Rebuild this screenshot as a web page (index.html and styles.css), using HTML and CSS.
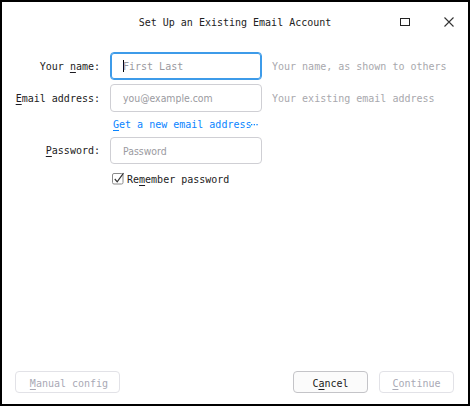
FILE: index.html
```html
<!DOCTYPE html>
<html>
<head>
<meta charset="utf-8">
<link rel="stylesheet" href="styles.css">
</head>
<body>
<div class="window">
  <div class="titlebar">
    <div class="title">Set Up an Existing Email Account</div>
    <div class="controls">
      <svg class="ctl" width="10" height="10" viewBox="0 0 10 10"><rect x="0.5" y="1.5" width="9" height="7" fill="none" stroke="#222" stroke-width="1"/></svg>
      <svg class="ctl" width="10" height="10" viewBox="0 0 10 10"><path d="M0.5 0.5 L9.5 9.5 M9.5 0.5 L0.5 9.5" stroke="#333" stroke-width="1.1"/></svg>
    </div>
  </div>
  <div class="form">
    <label class="label">Your <u>n</u>ame:</label>
    <div class="input focused"><span class="caret"></span><span class="ph mono">First Last</span></div>
    <div class="hint">Your name, as shown to others</div>

    <label class="label"><u>E</u>mail address:</label>
    <div class="input"><span class="ph prop">you@example.com</span></div>
    <div class="hint">Your existing email address</div>

    <div></div>
    <div class="link"><u>G</u>et a new email address<svg class="dots" width="7" height="2" viewBox="0 0 7 2"><rect x="0" y="0" width="1.3" height="1.3" fill="#0a84ff"/><rect x="2.7" y="0" width="1.3" height="1.3" fill="#0a84ff"/><rect x="5.4" y="0" width="1.3" height="1.3" fill="#0a84ff"/></svg></div>
    <div></div>

    <label class="label"><u>P</u>assword:</label>
    <div class="input"><span class="ph prop">Password</span></div>
    <div></div>

    <div></div>
    <div class="check">
      <svg class="box" width="13" height="13" viewBox="0 0 13 13"><rect x="0.5" y="1.5" width="10.5" height="10.5" rx="1.5" fill="#fff" stroke="#8a8a8a"/><path d="M2.8 7 L5.2 9.8 L11.5 1.2" fill="none" stroke="#333" stroke-width="1.2"/></svg>
      <span>Re<u>m</u>ember password</span>
    </div>
    <div></div>
  </div>
  <div class="spacer"></div>
  <div class="buttons">
    <button class="btn disabled wide"><u>M</u>anual config</button>
    <div class="grow"></div>
    <button class="btn">C<u>a</u>ncel</button>
    <button class="btn disabled"><u>C</u>ontinue</button>
  </div>
</div>
</body>
</html>
```
FILE: styles.css
```css
html, body {
  margin: 0;
  padding: 0;
  background: #fff;
}
body {
  font-family: "DejaVu Sans Mono", monospace;
  font-size: 10px;
  color: #1c1b22;
}
.window {
  width: 470px;
  height: 406px;
  box-sizing: border-box;
  border: 2px solid #000;
  display: flex;
  flex-direction: column;
  background: #fff;
}
.titlebar {
  height: 40px;
  display: flex;
  align-items: center;
  justify-content: center;
  position: relative;
}
.title {
  font-size: 10px;
  color: #222;
}
.controls {
  position: absolute;
  right: 14px;
  top: 15px;
  display: flex;
  gap: 34px;
}
.ctl { display: block; }
.form {
  display: grid;
  grid-template-columns: 98px 152px auto;
  grid-template-rows: 28px 28px 17px 27px 22px;
  column-gap: 10px;
  row-gap: 4px;
  margin-top: 10px;
}
.label {
  text-align: right;
  align-self: center;
  color: #1c1b22;
}
u {
  text-decoration: underline;
  text-underline-offset: 2px;
  text-decoration-thickness: 1px;
}
.input {
  box-sizing: border-box;
  border: 1px solid #cfcfd4;
  border-radius: 4px;
  display: flex;
  align-items: center;
  padding-left: 12px;
  background: #fff;
}
.input.focused {
  border: 1px solid #3d9be9;
  box-shadow: 0 0 0 1px #3d9be9 inset;
}
.caret {
  display: inline-block;
  width: 1px;
  height: 12px;
  background: #000;
  margin-right: -1px;
}
.ph { color: #9a9aa0; }
.ph.prop {
  font-family: "DejaVu Sans Condensed", "DejaVu Sans", sans-serif;
  font-size: 10.4px;
}
.hint {
  align-self: center;
  color: #a8a8ad;
  white-space: nowrap;
}
.link {
  color: #0a84ff;
  align-self: center;
  padding-left: 3px;
  white-space: nowrap;
}
.dots {
  display: inline-block;
  vertical-align: 2px;
  margin-left: 0;
}
.check {
  display: flex;
  align-items: center;
  gap: 2px;
  padding-left: 2px;
  color: #1c1b22;
}
.box { display: block; margin-top: -2px; }
.spacer { flex: 1; }
.buttons {
  display: flex;
  align-items: center;
  gap: 11px;
  padding: 0 14px 11px 13px;
}
.grow { flex: 1; }
.btn {
  font-family: "DejaVu Sans Mono", monospace;
  font-size: 10px;
  height: 22px;
  width: 75px;
  box-sizing: border-box;
  border: 1px solid #c4c4c8;
  border-radius: 4px;
  background: #fbfbfb;
  color: #1c1b22;
  padding: 2px 0 0 0;
}
.btn.wide { width: 105px; padding-left: 3px; }
.btn.disabled {
  border-color: #e2e2e7;
  color: #a9a9b5;
  background: #fff;
}
```
